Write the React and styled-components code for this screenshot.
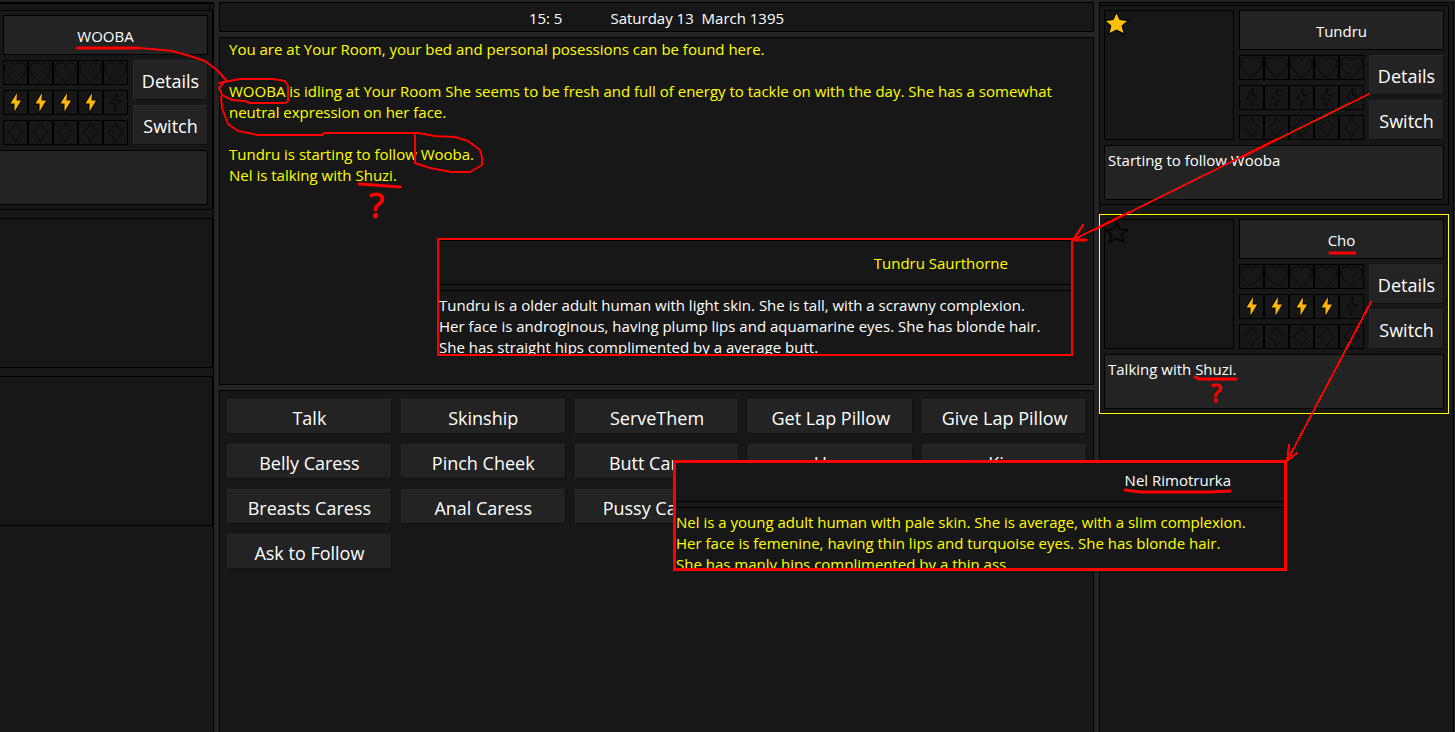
import React, { useState } from 'react'
import styled, { createGlobalStyle } from 'styled-components'

const actions = [
  ['Talk', 'Skinship', 'ServeThem', 'Get Lap Pillow', 'Give Lap Pillow'],
  ['Belly Caress', 'Pinch Cheek', 'Butt Caress', 'Hug', 'Kiss'],
  ['Breasts Caress', 'Anal Caress', 'Pussy Caress'],
  ['Ask to Follow'],
]

const people = [
  {
    name: 'Tundru',
    energy: 0,
    status: 'Starting to follow Wooba',
    favorite: true,
  },
  {
    name: 'Cho',
    energy: 4,
    status: 'Talking with Shuzi.',
    favorite: false,
    selected: true,
  },
]

const icons = {
  heart:
    'M11.5 22C8 17.500 1 13.500 1 7.500C1 4 3.500 1.500 6.500 1.500C9 1.500 10.800 2.800 11.500 5C12.200 2.800 14 1.500 16.500 1.500C19.500 1.500 22 4 22 7.500C22 13.500 15 17.500 11.500 22Z',
  bolt: 'M13 2L6.500 12.500H10.500L10.500 20.500L17 9.500H12.500Z',
  spark:
    'M11.500 1.500Q13.500 8.500 19.500 11.500Q13.500 14.500 11.500 21.500Q9.500 14.500 3.500 11.500Q9.500 8.500 11.500 1.500Z',
}

function Meter({ icon, filled = 0 }) {
  return (
    <Slots>
      {[0, 1, 2, 3, 4].map((n) => (
        <Slot key={n}>
          <svg width='23' height='23' viewBox='0 0 23 23'>
            <path
              d={icons[icon]}
              fill={n < filled ? '#ffb60a' : 'none'}
              stroke='#070707'
              strokeWidth={n < filled ? 2 : 1}
              paintOrder='stroke'
            />
          </svg>
        </Slot>
      ))}
    </Slots>
  )
}

function Character({ name, energy, status, favorite, selected, cropped }) {
  const [starred, setStarred] = useState(favorite)

  return (
    <Card $selected={selected} $cropped={cropped}>
      <CardTop>
        {!cropped && (
          <Portrait>
            <StarButton
              type='button'
              aria-label='Favorite'
              aria-pressed={starred}
              onClick={() => setStarred(!starred)}
            >
              <svg width='24' height='24' viewBox='0 0 24 24'>
                <path
                  d='M11.500 2.500L14.500 9L22 10L16.500 14.700L18.500 22L11.500 18.500L4.500 22L6.500 14.700L1 10L8.500 9Z'
                  fill={starred ? '#ffc107' : 'none'}
                  stroke='#060606'
                  strokeWidth={starred ? 3 : 2}
                  paintOrder='stroke'
                />
              </svg>
            </StarButton>
          </Portrait>
        )}
        <Info>
          <NameBox>{name}</NameBox>
          <InfoRow>
            <Meters>
              <Meter icon='heart' />
              <Meter icon='bolt' filled={energy} />
              <Meter icon='spark' />
            </Meters>
            <SideButtons>
              <Button type='button'>Details</Button>
              <Button type='button'>Switch</Button>
            </SideButtons>
          </InfoRow>
        </Info>
      </CardTop>
      <Status $cropped={cropped}>{status}</Status>
    </Card>
  )
}

function App() {
  return (
    <Page>
      <GlobalStyle />
      <LeftColumn>
        <Tab />
        <Character name='WOOBA' energy={4} cropped />
        <EmptyCard />
        <EmptyCard />
      </LeftColumn>

      <Center>
        <Clock>
          <span>15: 5</span>
          <span>Saturday 13&nbsp; March 1395</span>
        </Clock>
        <Log>
          <p>
            You are at Your Room, your bed and personal posessions can be found
            here.
          </p>
          <p>
            WOOBA is idling at Your Room She seems to be fresh and full of
            energy to tackle on with the day. She has a somewhat neutral
            expression on her face.
          </p>
          <p>
            Tundru is starting to follow Wooba.
            <br />
            Nel is talking with Shuzi.
          </p>
        </Log>
        <Actions>
          {actions.map((row) => (
            <ActionRow key={row[0]}>
              {row.map((label) => (
                <Button type='button' key={label}>
                  {label}
                </Button>
              ))}
            </ActionRow>
          ))}
        </Actions>
      </Center>

      <RightColumn>
        {people.map((person) => (
          <Character key={person.name} {...person} />
        ))}
      </RightColumn>

      <TundruPopup>
        <PopupName>Tundru Saurthorne</PopupName>
        <PopupText>
          Tundru is a older adult human with light skin. She is tall, with a
          scrawny complexion.
          <br />
          Her face is androginous, having plump lips and aquamarine eyes. She
          has blonde hair.
          <br />
          She has straight hips complimented by a average butt.
        </PopupText>
      </TundruPopup>

      <NelPopup>
        <PopupName>Nel Rimotrurka</PopupName>
        <PopupText>
          Nel is a young adult human with pale skin. She is average, with a slim
          complexion.
          <br />
          Her face is femenine, having thin lips and turquoise eyes. She has
          blonde hair.
          <br />
          She has manly hips complimented by a thin ass.
        </PopupText>
      </NelPopup>

      <Marks width='1455' height='732' viewBox='0 0 1455 732'>
        {/* name to log */}
        <path
          d='M77 48H139L152 49L172 51L190 56L205 61L217 70L226 80'
        />
        <path d='M219 83L240 79H273L285 81L288 86V101L285 103H250L245 101L232 100L222 95L219 88L224 82' />
        <path d='M221 97L222 108L228 124L238 131L258 135H322L324 133H418L435 136L455 137L468 141L480 150L482 157V165L470 172H452L430 168L415 163V135' />
        {/* arrows */}
        <g shapeRendering='crispEdges'>
          <path d='M1369 94L1073 240L1083 225' />
          <path d='M1371 302L1287 461L1289 445M1287 461L1297 453' />
        </g>
        {/* underlines and arrow tail */}
        <g strokeWidth='3'>
          <path d='M78 48H138' />
          <path d='M1075 240H1086' />
          <path d='M359 184L374 185L400 187' />
          <path d='M1330 253H1355' />
          <path d='M1195 377L1199 379H1236' />
          <path d='M1125 490L1140 492H1210L1230 491' />
        </g>
        <text x='369' y='218' fontSize='35'>
          ?
        </text>
        <text x='1211' y='402' fontSize='25'>
          ?
        </text>
      </Marks>
    </Page>
  )
}

export default App

const GlobalStyle = createGlobalStyle`
  * {
    box-sizing: border-box;
  }
  body {
    margin: 0;
    background: #232323;
    color: #fff;
    font-family: 'Open Sans', 'Noto Sans', sans-serif;
    font-size: 15px;
    line-height: 21px;
  }
  p {
    margin: 0;
  }
`

const Page = styled.div`
  position: relative;
  display: grid;
  grid-template-columns: 214px 1fr 355px;
  gap: 5px;
  min-height: 100vh;
  padding: 2px 1px 0 0;
  overflow: hidden;
`

const Panel = styled.section`
  background: #171717;
  border: 1px solid #000;
`

const LeftColumn = styled(Panel)`
  display: flex;
  flex-direction: column;
  border-width: 2px 1px 0 0;
`

const Tab = styled.div`
  height: 6px;
  margin-right: 3px;
  border: solid #000;
  border-width: 0 1px 0 0;
`

const Card = styled.article`
  height: 200px;
  padding: 4px;
  padding-left: ${({ $cropped }) => ($cropped ? '3px' : '4px')};
  border: 1px solid ${({ $selected }) => ($selected ? '#ffff00' : '#000')};
  border-left-width: ${({ $cropped }) => ($cropped ? '0' : '1px')};
`

const EmptyCard = styled.div`
  height: 150px;
  margin-top: 8px;
  border: 1px solid #000;
  border-left: 0;
`

const CardTop = styled.div`
  display: flex;
  gap: 5px;
`

const Portrait = styled.div`
  width: 130px;
  height: 130px;
  border: 1px solid #000;
`

const StarButton = styled.button`
  display: block;
  padding: 0;
  border: 0;
  background: none;
  cursor: pointer;
  svg {
    display: block;
  }
`

const Info = styled.div`
  flex: 1;
`

const NameBox = styled.div`
  display: grid;
  place-items: center;
  height: 40px;
  padding-top: 3px;
  background: #232323;
  border: 1px solid #000;
`

const InfoRow = styled.div`
  display: flex;
  gap: 5px;
  margin-top: 5px;
`

const Meters = styled.div`
  display: grid;
  gap: 5px;
`

const Slots = styled.div`
  display: flex;
`

const Slot = styled.div`
  width: 25px;
  height: 25px;
  border: 1px solid #000;
  svg {
    display: block;
  }
`

const SideButtons = styled.div`
  display: grid;
  flex: 1;
  gap: 5px;
`

const Button = styled.button`
  min-width: 0;
  padding: 2px 0 0;
  background: #232323;
  border: 1px solid;
  border-color: #292929 #101010 #101010 #292929;
  color: #fff;
  font-family: inherit;
  font-size: 18px;
  line-height: 24px;
  white-space: nowrap;
  cursor: pointer;
  &:hover {
    background: #2c2c2c;
  }
`

const Status = styled.div`
  height: 55px;
  margin-top: 5px;
  margin-left: ${({ $cropped }) => ($cropped ? '-3px' : '0')};
  padding: 4px 3px;
  background: #232323;
  border: 1px solid #000;
  border-left-width: ${({ $cropped }) => ($cropped ? '0' : '1px')};
`

const Center = styled.main`
  display: flex;
  flex-direction: column;
  gap: 5px;
  min-width: 0;
`

const Clock = styled(Panel)`
  display: flex;
  justify-content: center;
  align-items: center;
  gap: 48px;
  height: 30px;
  padding-top: 2px;
`

const Log = styled(Panel)`
  display: flex;
  flex-direction: column;
  gap: 21px;
  min-height: 348px;
  padding: 1px 9px;
  color: #ffff00;
`

const Actions = styled(Panel)`
  display: flex;
  flex: 1;
  flex-direction: column;
  gap: 10px;
  padding: 8px 6px 8px 7px;
  border-bottom: 0;
`

const ActionRow = styled.div`
  display: grid;
  grid-template-columns: repeat(5, 1fr);
  grid-auto-rows: 35px;
  gap: 9px;
`

const RightColumn = styled(Panel)`
  display: flex;
  flex-direction: column;
  gap: 9px;
  padding: 2px 4px 0 0;
  border-left-width: 0;
  border-bottom: 0;
  box-shadow: inset 1px 0 #000;
`

const Popup = styled.aside`
  position: absolute;
  overflow: hidden;
  background: #171717;
`

const PopupName = styled.h2`
  display: flex;
  justify-content: flex-end;
  align-items: center;
  margin: 0 0 5px;
  border-bottom: 1px solid #000;
  font-size: 15px;
  font-weight: 400;
`

const PopupText = styled.p`
  padding-top: 4px;
  border-top: 1px solid #000;
  white-space: nowrap;
`

const TundruPopup = styled(Popup)`
  top: 238px;
  left: 437px;
  width: 636px;
  height: 118px;
  border: 2px solid #ff0000;
  ${PopupName} {
    height: 45px;
    padding: 1px 63px 0 0;
    border-top: 1px solid #000;
    color: #ffff00;
  }
`

const NelPopup = styled(Popup)`
  top: 460px;
  left: 673px;
  width: 614px;
  height: 111px;
  border: 3px solid #ff0000;
  ${PopupName} {
    height: 39px;
    padding: 0 53px 3px 0;
  }
  ${PopupText} {
    color: #ffff00;
  }
`

const Marks = styled.svg`
  position: absolute;
  top: 0;
  left: 0;
  fill: none;
  stroke: #ff0000;
  stroke-width: 2;
  stroke-linecap: round;
  stroke-linejoin: round;
  pointer-events: none;
  text {
    fill: #ff0000;
    stroke-width: 1;
  }
`
